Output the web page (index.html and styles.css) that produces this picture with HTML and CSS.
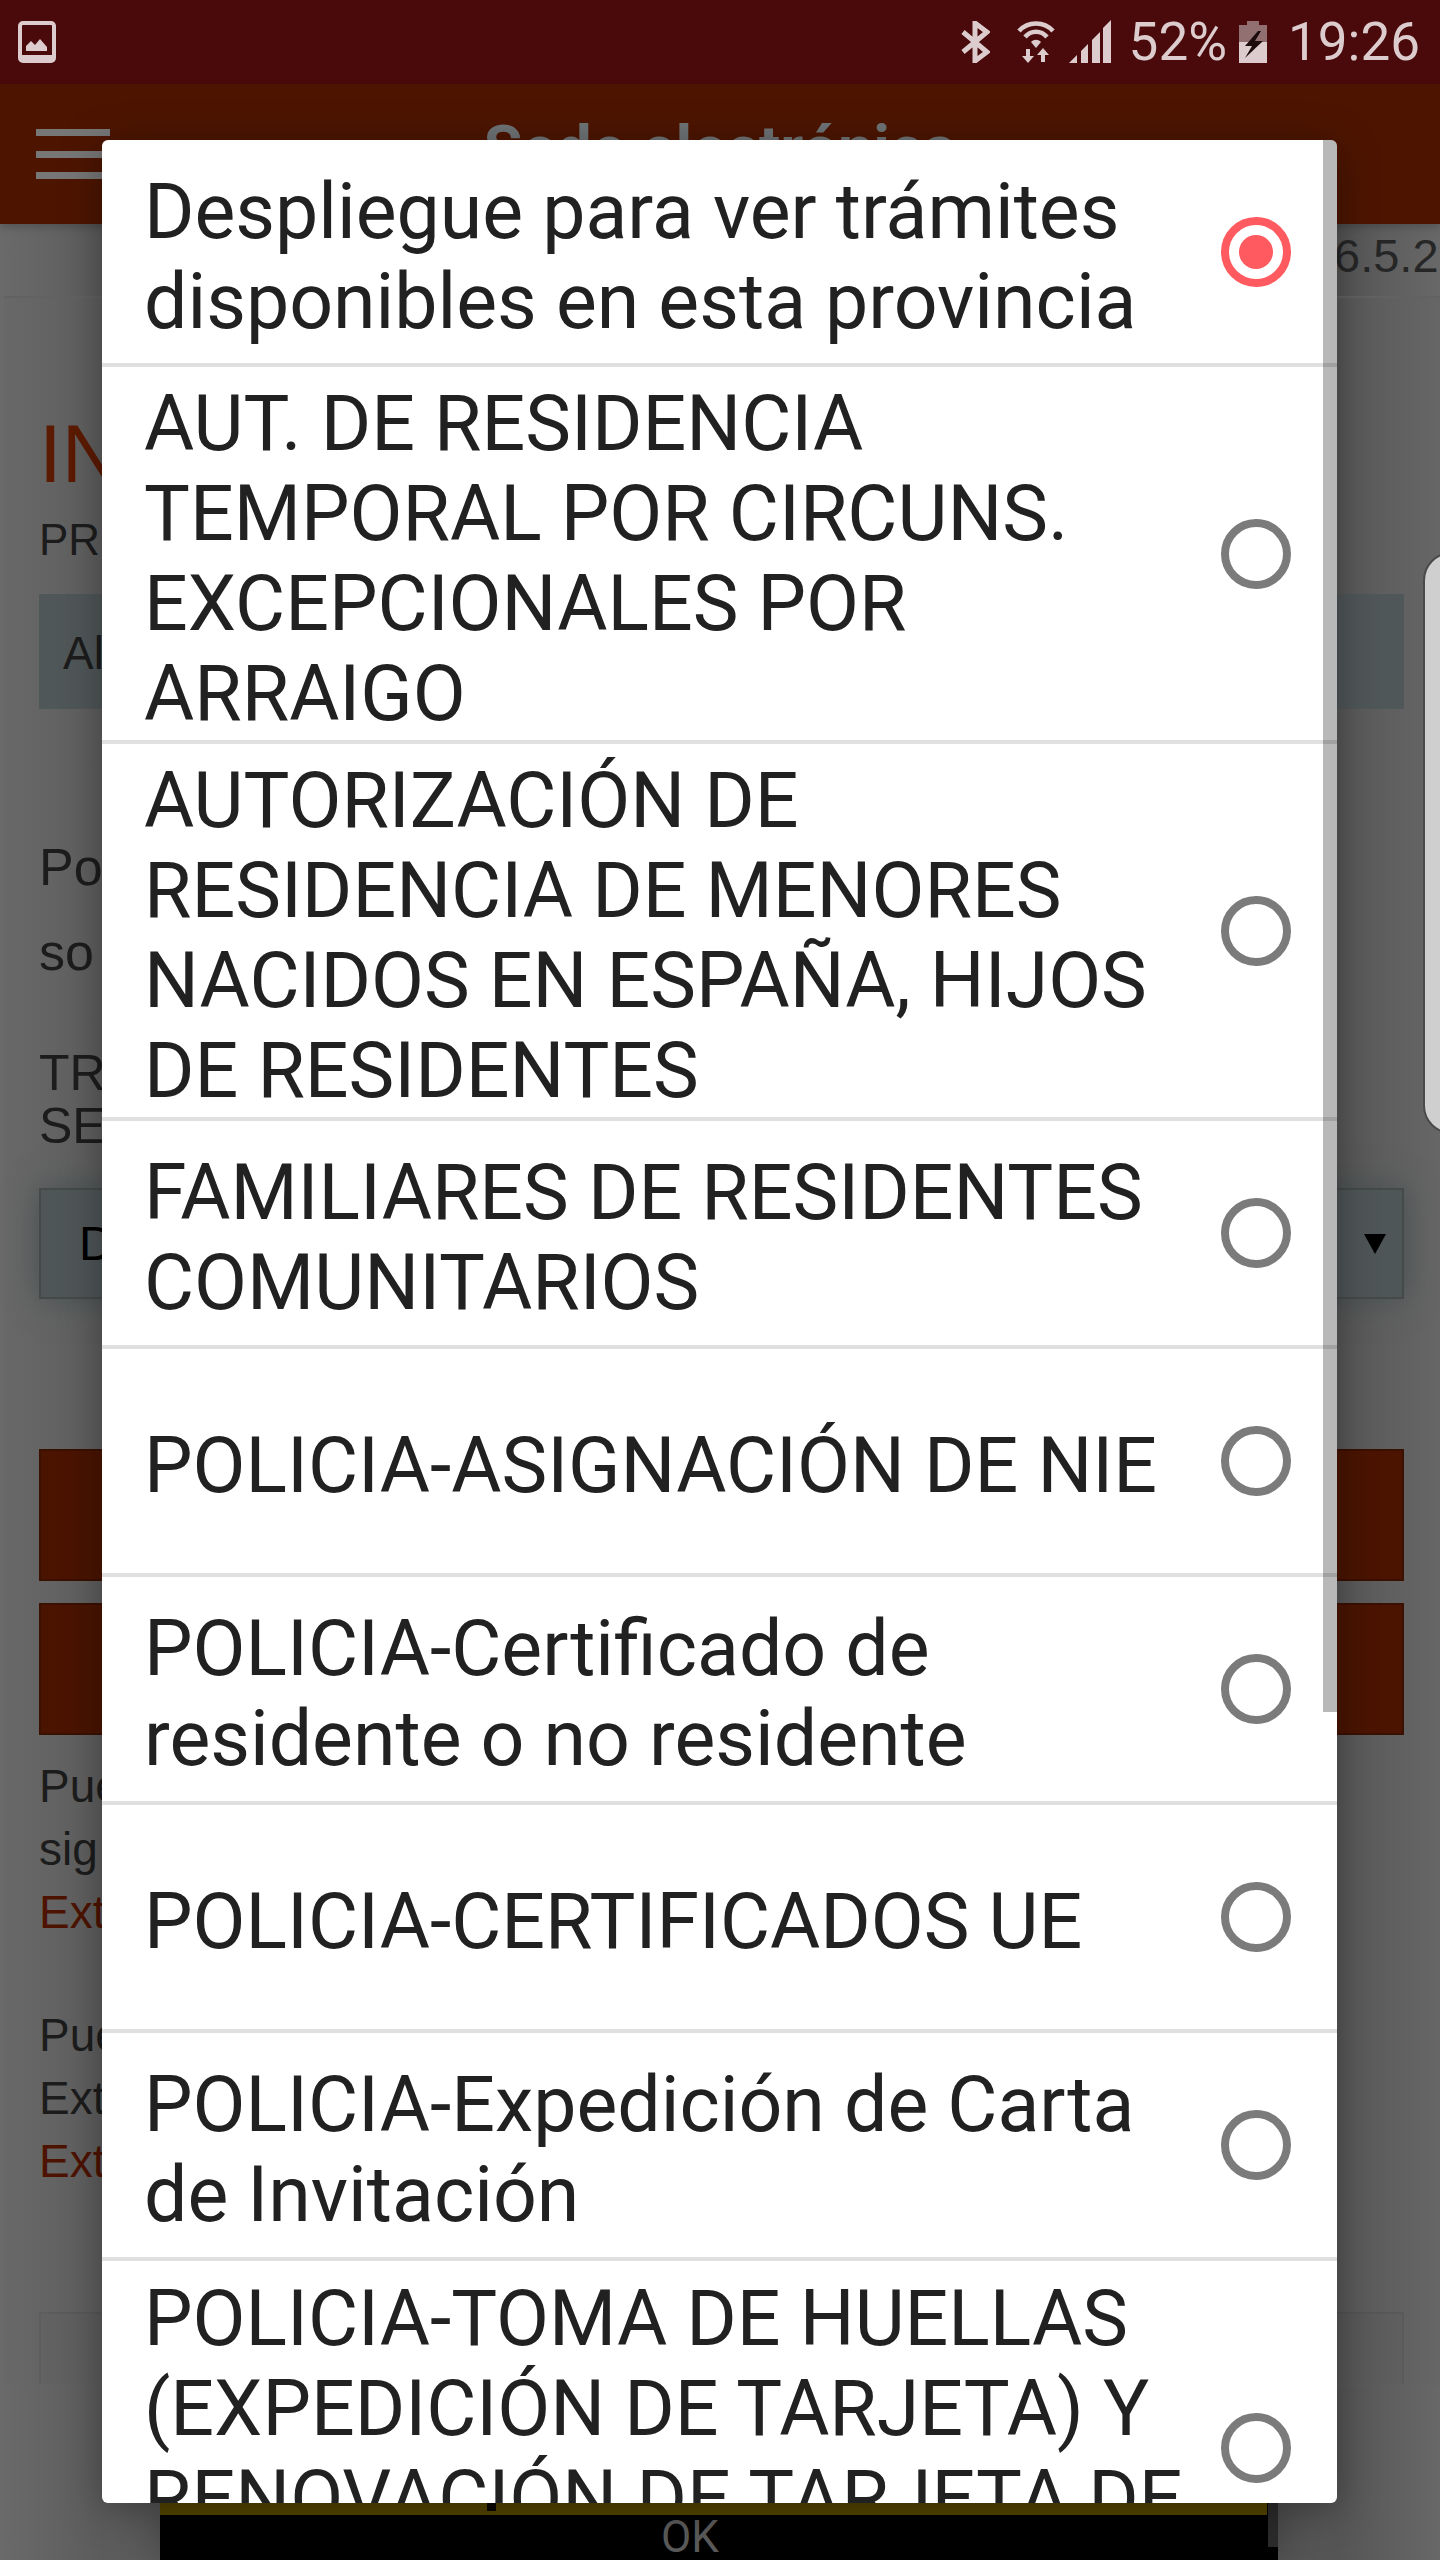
FILE: index.html
```html
<!DOCTYPE html>
<html lang="es">
<head>
    <meta charset="UTF-8">
    <title>Sede electrónica</title>
    <link rel="stylesheet" href="styles.css">
</head>
<body>
    <div class="statusBar">
        <svg width="38" height="42" viewBox="0 0 38 42">
            <rect x="2" y="2" width="34" height="38" rx="3" fill="none" stroke="#dccccd" stroke-width="4"/>
            <rect x="2" y="34" width="34" height="6" fill="#dccccd"/>
            <path d="M8 30 V25 L13 20 L17 24 L22 18 L29 26 V30 Z" fill="#dccccd"/>
        </svg>
        <div class="statusRight">
            <svg width="30" height="42" viewBox="0 0 30 42">
                <path d="M3 11 L27 31 L15 40 V2 L27 11 L3 31" fill="none" stroke="#dccccd" stroke-width="5"/>
            </svg>
            <svg class="wifiIcon" width="38" height="44" viewBox="0 0 38 44">
                <path d="M2 11 C11 1 27 1 36 11" fill="none" stroke="#dccccd" stroke-width="4.5"/>
                <path d="M8 17 C14 10 24 10 30 17" fill="none" stroke="#dccccd" stroke-width="4.5"/>
                <path d="M14 22 C17 19 21 19 24 22 L19 28 Z" fill="#dccccd"/>
                <path d="M9 29 H13 V36 H17 L11 43 L5 36 H9 Z" fill="#dccccd"/>
                <path d="M26 28 L32 35 H28 V42 H24 V35 H20 Z" fill="#dccccd"/>
            </svg>
            <svg class="signalIcon" width="42" height="44" viewBox="0 0 42 44">
                <path d="M0 43 L8 35 V43 Z M12 31 L19 24 V43 H12 Z M23 20 L31 12 V43 H23 Z M34 8 L42 0 V43 H34 Z" fill="#dccccd"/>
            </svg>
            <span class="percent">52%</span>
            <svg class="batteryIcon" width="28" height="42" viewBox="0 0 28 42">
                <rect x="8" y="0" width="12" height="5" fill="#927072"/>
                <rect x="0" y="4" width="28" height="17" fill="#927072"/>
                <rect x="0" y="21" width="28" height="21" fill="#dccccd"/>
                <path d="M19 10 L6 25 H13 L6 37 L24 20 H16 L22 10 Z" fill="#1d0c0d"/>
            </svg>
            <span class="clock">19:26</span>
        </div>
    </div>

    <div class="appBar">
        <div class="burger"><i></i><i></i><i></i></div>
        <div class="appTitle">Sede electrónica</div>
    </div>

    <div class="page">
        <div class="version">6.5.2</div>
        <div class="pageInner">
            <h1>IN</h1>
            <p class="small">PR</p>
            <div class="provBox">Al</div>
            <p class="para">Po</p>
            <p class="para second">so</p>
            <p class="label">TRA<br>SER</p>
            <div class="selectBox">
                <span>D</span>
                <span class="arrow"></span>
            </div>
            <div class="redBtn first"></div>
            <div class="redBtn"></div>
            <p class="note">Pue<br>sig<br><span class="link">Ext</span></p>
            <p class="note gapTop">Pue<br>Ext<br><span class="link">Ext</span></p>
            <div class="emptyBox"></div>
        </div>
        <div class="edgeHandle"></div>
    </div>

    <div class="alertBottom">
        <div class="alertStrip"></div>
        <div class="alertOk">OK</div>
    </div>

    <div class="dialog">
        <div class="option first">
            <div class="optionText">Despliegue para ver trámites disponibles en esta provincia</div>
            <div class="radio checked"></div>
        </div>
        <div class="option">
            <div class="optionText">AUT. DE RESIDENCIA TEMPORAL POR CIRCUNS. EXCEPCIONALES POR ARRAIGO</div>
            <div class="radio"></div>
        </div>
        <div class="option">
            <div class="optionText">AUTORIZACIÓN DE RESIDENCIA DE MENORES NACIDOS EN ESPAÑA, HIJOS DE RESIDENTES</div>
            <div class="radio"></div>
        </div>
        <div class="option">
            <div class="optionText">FAMILIARES DE RESIDENTES COMUNITARIOS</div>
            <div class="radio"></div>
        </div>
        <div class="option">
            <div class="optionText">POLICIA-ASIGNACIÓN DE NIE</div>
            <div class="radio"></div>
        </div>
        <div class="option">
            <div class="optionText">POLICIA-Certificado de residente o no residente</div>
            <div class="radio"></div>
        </div>
        <div class="option">
            <div class="optionText">POLICIA-CERTIFICADOS UE</div>
            <div class="radio"></div>
        </div>
        <div class="option">
            <div class="optionText">POLICIA-Expedición de Carta de Invitación</div>
            <div class="radio"></div>
        </div>
        <div class="option last">
            <div class="optionText">POLICIA-TOMA DE HUELLAS (EXPEDICIÓN DE TARJETA) Y RENOVACIÓN DE TARJETA DE</div>
            <div class="radio"></div>
        </div>
        <div class="scrollThumb"></div>
    </div>
</body>
</html>
```

FILE: styles.css
```css
* {
    box-sizing: border-box;
}
html, body {
    margin: 0;
    padding: 0;
}
body {
    width: 1440px;
    height: 2560px;
    overflow: hidden;
    position: relative;
    background-color: #606060;
    font-family: "Liberation Sans", sans-serif;
    color: #1c1c1c;
}
p, h1 {
    margin: 0;
}

/* status bar */
.statusBar {
    height: 84px;
    background-color: #4a0a0c;
    display: flex;
    justify-content: space-between;
    align-items: center;
    padding: 0 20px 0 18px;
}
.statusRight {
    display: flex;
    align-items: center;
    color: #dccccd;
    font-family: Roboto, sans-serif;
    font-size: 53px;
}
.wifiIcon {
    margin-left: 27px;
}
.signalIcon {
    margin-left: 14px;
}
.percent {
    margin-left: 18px;
}
.batteryIcon {
    margin-left: 12px;
}
.clock {
    margin-left: 21px;
}

/* app bar */
.appBar {
    height: 140px;
    background-color: #4d1500;
    display: flex;
    justify-content: center;
    position: relative;
    z-index: 1;
    box-shadow: 0 3px 8px rgba(0, 0, 0, 0.2);
}
.burger {
    position: absolute;
    left: 36px;
    top: 45px;
    width: 74px;
    display: flex;
    flex-direction: column;
    gap: 14.5px;
}
.burger i {
    display: block;
    height: 7px;
    background-color: #777;
}
.appTitle {
    padding-top: 28px;
    font-family: Roboto, sans-serif;
    font-weight: bold;
    font-size: 63px;
    color: #6f7476;
}

/* greyed page behind the dialog */
.page {
    position: relative;
    height: 2336px;
    padding-top: 72px;
    background: linear-gradient(90deg, #6a6a6a 0, #5c5c5c 102px, #555 1337px, #686868 1440px);
}
.version {
    position: absolute;
    top: -1px;
    left: 1334px;
    font-size: 47px;
    line-height: 66px;
    color: #262626;
    white-space: nowrap;
}
.pageInner {
    margin-left: 4px;
    padding: 0 36px 0 35px;
    height: 2089px;
    border-top: 2px solid #626262;
    background: linear-gradient(90deg, #686868 0, #5e5e5e 98px, #585858 1333px, #666 1436px);
    white-space: nowrap;
}
h1 {
    padding-top: 111px;
    font-size: 82px;
    line-height: 90px;
    font-weight: normal;
    color: #5c1a02;
}
.small {
    margin-top: 16px;
    font-size: 44px;
    line-height: 50px;
}
.provBox {
    margin-top: 29px;
    height: 115px;
    background-color: #505758;
    padding: 32px 24px;
    font-size: 46px;
}
.para {
    margin-top: 128px;
    font-size: 52px;
    line-height: 60px;
}
.para.second {
    margin-top: 25px;
}
.label {
    margin-top: 65px;
    font-size: 50px;
    line-height: 53px;
}
.selectBox {
    margin-top: 35px;
    height: 111px;
    background-color: #4f5657;
    border: 2px solid #46494a;
    box-shadow: 0 0 30px #485052;
    padding: 0 38px;
    font-size: 48px;
    color: #000;
    display: flex;
    justify-content: space-between;
    align-items: center;
}
.arrow {
    width: 0;
    height: 0;
    border-left: 11px solid transparent;
    border-right: 11px solid transparent;
    border-top: 20px solid #000;
    margin-right: -22px;
}
.redBtn {
    margin-top: 22px;
    height: 132px;
    background-color: #4a1400;
    border: 2px solid #3a1000;
}
.redBtn.first {
    margin-top: 150px;
}
.note {
    margin-top: 20px;
    font-size: 46px;
    line-height: 63px;
}
.note.gapTop {
    margin-top: 60px;
}
.link {
    color: #4d1300;
}
.emptyBox {
    margin-top: 119px;
    height: 72px;
    border: 2px solid rgba(0, 0, 0, 0.05);
    border-bottom: 0;
    background-color: rgba(0, 0, 0, 0.02);
}
.edgeHandle {
    position: absolute;
    top: 328px;
    right: -40px;
    width: 57px;
    height: 582px;
    border-radius: 34px;
    background-color: #cfcfcf;
    border: 2px solid #4a4a4a;
}

/* bottom of the alert under the dialog */
.alertBottom {
    position: absolute;
    left: 160px;
    top: 2503px;
    width: 1118px;
    height: 57px;
    background-color: #000;
    box-shadow: 0 0 40px rgba(0, 0, 0, 0.3);
}
.alertBottom::after {
    content: "";
    position: absolute;
    top: 0;
    right: 0;
    width: 10px;
    height: 44px;
    background-color: #2b2b2b;
}
.alertStrip {
    position: relative;
    height: 12px;
    margin-right: 11px;
    background-color: #544500;
}
.alertStrip::after {
    content: "";
    position: absolute;
    top: 0;
    left: 327px;
    width: 9px;
    height: 8px;
    background-color: #0a0800;
}
.alertOk {
    padding-right: 58px;
    text-align: center;
    font-family: Roboto, sans-serif;
    font-size: 44px;
    line-height: 44px;
    color: #5a5a5a;
}

/* dialog */
.dialog {
    position: absolute;
    left: 102px;
    top: 140px;
    width: 1235px;
    height: 2363px;
    background-color: #fff;
    border-radius: 6px;
    overflow: hidden;
    box-shadow: 0 6px 40px rgba(0, 0, 0, 0.35);
    z-index: 2;
    font-family: Roboto, sans-serif;
}
.option {
    height: 228px;
    padding: 0 46px 0 42px;
    border-bottom: 4px solid #e0e0e0;
    display: flex;
    align-items: center;
    justify-content: space-between;
    font-size: 77px;
    line-height: 90px;
    color: #212121;
}
.option.first {
    height: 227px;
}
.option:nth-child(2), .option:nth-child(3) {
    height: 377px;
}
.option.last {
    height: 420px;
    align-items: flex-start;
    padding-top: 3px;
    border-bottom: 0;
}
.optionText {
    width: 1040px;
    padding-top: 10px;
}
.radio {
    width: 70px;
    height: 70px;
    flex-shrink: 0;
    border: 8px solid #7b7b7b;
    border-radius: 50%;
    display: flex;
    align-items: center;
    justify-content: center;
}
.option.last .radio {
    margin-top: 149px;
}
.radio.checked {
    border-color: #ff5a5f;
}
.radio.checked::after {
    content: "";
    width: 34px;
    height: 34px;
    border-radius: 50%;
    background-color: #ff5a5f;
}
.scrollThumb {
    position: absolute;
    top: 0;
    right: 0;
    width: 14px;
    height: 1572px;
    background-color: rgba(0, 0, 0, 0.28);
}
```
